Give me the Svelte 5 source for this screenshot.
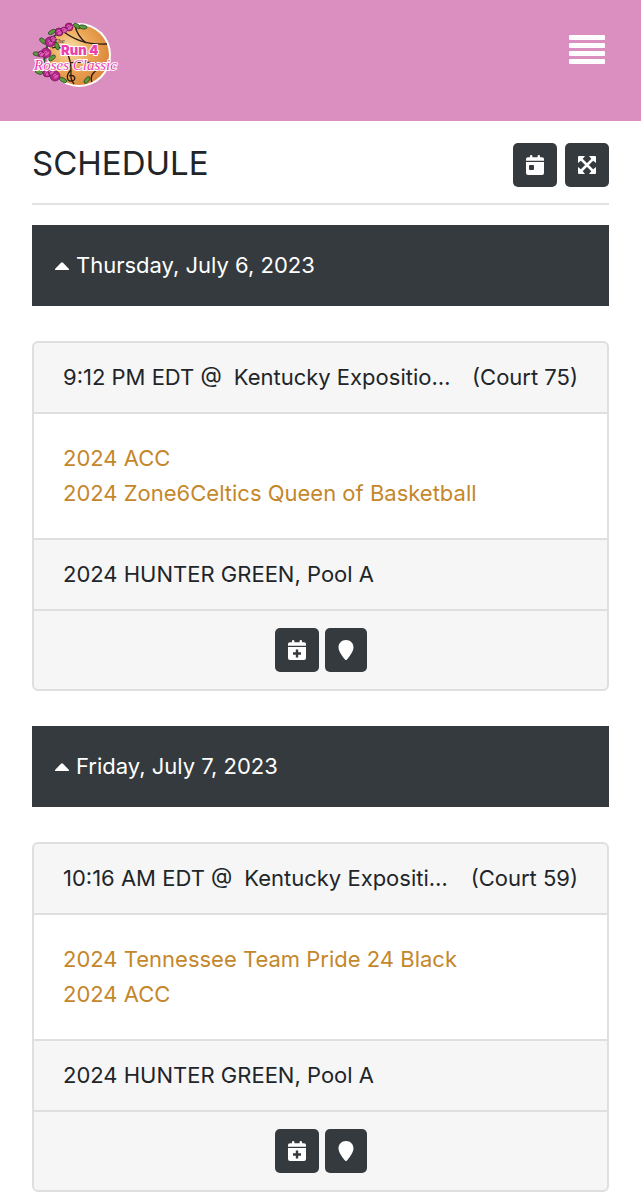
<script lang="ts">
	interface Game {
		time: string;
		venue: string;
		court: string;
		teams: string[];
		pool: string;
	}

	interface Day {
		date: string;
		open: boolean;
		games: Game[];
	}

	let days: Day[] = $state([
		{
			date: 'Thursday, July 6, 2023',
			open: true,
			games: [
				{
					time: '9:12 PM EDT',
					venue: 'Kentucky Exposition Center',
					court: 'Court 75',
					teams: ['2024 ACC', '2024 Zone6Celtics Queen of Basketball'],
					pool: '2024 HUNTER GREEN, Pool A'
				}
			]
		},
		{
			date: 'Friday, July 7, 2023',
			open: true,
			games: [
				{
					time: '10:16 AM EDT',
					venue: 'Kentucky Exposition Center',
					court: 'Court 59',
					teams: ['2024 Tennessee Team Pride 24 Black', '2024 ACC'],
					pool: '2024 HUNTER GREEN, Pool A'
				}
			]
		}
	]);

	const roses = [
		[39, 10, 4],
		[29, 15, 4],
		[34, 13, 3],
		[20, 25, 5],
		[23, 22, 3],
		[16, 36, 5],
		[11, 37, 3],
		[17, 56, 4],
		[25, 59, 5],
		[21, 55, 3]
	];
	const leaves = [
		[47, 9, 30],
		[53, 10, 10],
		[22, 15, -30],
		[13, 24, 40],
		[27, 29, 70],
		[7, 37, 10],
		[22, 41, -40],
		[9, 55, 20],
		[33, 63, 30],
		[57, 63, -50]
	];

	function toggleAll() {
		const open = days.some((day) => !day.open);
		days.forEach((day) => (day.open = open));
	}
</script>

<header>
	<a class="logo" href="/" aria-label="Run 4 Roses Classic">
		<svg width="90" height="74" viewBox="2 0 90 74">
			<defs>
				<radialGradient id="ball" cx="0.35" cy="0.4" r="0.7">
					<stop offset="0" stop-color="#fbe0ac" />
					<stop offset="0.5" stop-color="#eba655" />
					<stop offset="1" stop-color="#d98438" />
				</radialGradient>
			</defs>
			<circle cx="49" cy="38" r="32" fill="#fff" />
			<circle cx="49" cy="38" r="30" fill="url(#ball)" />
			<g fill="none" stroke="#2b1b14" stroke-width="1.3">
				<path d="M33 14C45 24 60 28 77 27" />
				<path d="M45 9C47 17 51 22 56 26" />
				<path d="M22 31C31 28 37 32 40 44S38 60 44 67" />
				<path d="M22 51C32 46 46 43 78 47" />
				<path d="M41 53C35 59 37 65 42 64S45 57 39 59" />
				<path d="M62 65C59 58 65 53 73 50" />
			</g>
			<path d="M39 11C25 15 17 25 15 37S14 53 26 60" fill="none" stroke="#245b2c" stroke-width="2" />
			{#each leaves as [x, y, angle]}
				<ellipse cx={x} cy={y} rx="4" ry="2" fill="#5d9b3d" stroke="#1e4424" stroke-width="0.7" transform="rotate({angle} {x} {y})" />
			{/each}
			{#each roses as [x, y, r]}
				<circle cx={x} cy={y} {r} fill="#b5268a" stroke="#681250" stroke-width="0.7" />
				<path d="M{x - 2} {y}q1 -3 3 -1t-2 2m0 1q3 1 4 -3" fill="none" stroke="#e46bbd" />
			{/each}
			<text class="the" x="24" y="26">The</text>
			<text class="run" x="31" y="38">Run 4</text>
			<text class="classic" x="4" y="53">Roses Classic</text>
		</svg>
	</a>
	<button class="menu" aria-label="Menu">
		<svg width="36" height="29" viewBox="0 0 36 29" fill="#fff">
			<rect width="36" height="5" rx="1" />
			<rect y="8" width="36" height="5" rx="1" />
			<rect y="16" width="36" height="5" rx="1" />
			<rect y="24" width="36" height="5" rx="1" />
		</svg>
	</button>
</header>

<main>
	<div class="title">
		<h1>SCHEDULE</h1>
		<div class="tools">
			<button class="btn" aria-label="Pick a day">
				<svg width="18" height="20" viewBox="0 0 18 20">
					<path fill="#fff" d="M0 7h18v11q0 2-2 2H2q-2 0-2-2zM0 5.8V4q0-1.8 2-1.8h2V1q0-1 1.2-1T6.4 1v1.2h5.2V1q0-1 1.2-1T14 1v1.2h2q2 0 2 1.8v1.8z" />
					<rect x="3" y="10" width="5" height="5" rx="1" fill="#343a3e" />
				</svg>
			</button>
			<button class="btn" aria-label="Expand or collapse all" onclick={toggleAll}>
				<svg width="18" height="18" viewBox="0 0 18 18">
					<path d="M3 3l12 12M15 3L3 15" stroke="#fff" stroke-width="2.5" />
					<path fill="#fff" d="M0 1q0-1 1-1h6L5 2.5 2.5 5 0 7zM18 1q0-1-1-1h-6l2 2.5L15.5 5 18 7zM0 17q0 1 1 1h6l-2-2.5L2.5 13 0 11zM18 17q0 1-1 1h-6l2-2.5 2.5-2.5 2.5-2z" />
				</svg>
			</button>
		</div>
	</div>

	{#each days as day}
		<section>
			<button class="day" aria-expanded={day.open} onclick={() => (day.open = !day.open)}>
				<svg class:closed={!day.open} width="14" height="8" viewBox="0 0 14 8">
					<path fill="#fff" d="M1 8Q-1 8 .5 6.5L6 .8q1-1 2 0l5.5 5.7Q15 8 13 8z" />
				</svg>
				{day.date}
			</button>
			{#if day.open}
				{#each day.games as game}
					<article>
						<div class="row where">
							<span>{game.time} @</span>
							<span class="venue">{game.venue}</span>
							<span>({game.court})</span>
						</div>
						<div class="row teams">
							{#each game.teams as team}
								<a href="/teams">{team}</a>
							{/each}
						</div>
						<div class="row">{game.pool}</div>
						<div class="row actions">
							<button class="btn" aria-label="Add to calendar">
								<svg width="18" height="20" viewBox="0 0 18 20">
									<path fill="#fff" d="M0 7h18v11q0 2-2 2H2q-2 0-2-2zM0 5.8V4q0-1.8 2-1.8h2V1q0-1 1.2-1T6.4 1v1.2h5.2V1q0-1 1.2-1T14 1v1.2h2q2 0 2 1.8v1.8z" />
									<path d="M9 9.5v8M5 13.5h8" stroke="#343a3e" stroke-width="2.4" />
								</svg>
							</button>
							<button class="btn pin" aria-label="Show on map">
								<svg width="16" height="20" viewBox="0 0 16 20">
									<path fill="#fff" d="M8 0C3.5 0 .5 3.3.5 7.5c0 4 4.5 9.5 6.5 12q1 1 2 0c2-2.5 6.5-8 6.5-12C15.5 3.3 12.5 0 8 0z" />
								</svg>
							</button>
						</div>
					</article>
				{/each}
			{/if}
		</section>
	{/each}
</main>

<style>
	:global(body) {
		background: #fff;
		color: #212529;
		font-family: Inter, 'Liberation Sans', sans-serif;
		font-size: 22px;
		line-height: 35px;
	}
	button {
		border: 0;
		font: inherit;
		cursor: pointer;
	}
	svg {
		display: block;
		flex: none;
	}
	header {
		display: flex;
		justify-content: space-between;
		align-items: flex-start;
		box-sizing: border-box;
		min-height: 121px;
		padding: 17px 32px;
		background: #da8fc0;
	}
	.logo svg {
		overflow: visible;
	}
	.the {
		font: italic 7px 'Liberation Serif', serif;
		fill: #222;
	}
	.run,
	.classic {
		fill: #ec3fae;
		stroke: #fff;
		stroke-width: 2px;
		paint-order: stroke;
	}
	.run {
		font: 900 13px Inter, sans-serif;
	}
	.classic {
		font: italic 15px 'Liberation Serif', serif;
	}
	.menu {
		padding: 18px 4px;
		background: none;
	}
	main {
		padding: 22px 32px 0;
	}
	.title {
		display: flex;
		justify-content: space-between;
		padding-bottom: 16px;
		border-bottom: 2px solid #e2e2e2;
		margin-bottom: 20px;
	}
	h1 {
		margin: 0;
		font-size: 33px;
		font-weight: 400;
		line-height: 40px;
	}
	.tools {
		display: flex;
		gap: 8px;
	}
	.btn {
		display: flex;
		justify-content: center;
		align-items: center;
		width: 44px;
		height: 44px;
		padding: 0;
		border-radius: 5px;
		background: #343a3e;
	}
	.pin {
		width: 42px;
	}
	section {
		margin-bottom: 35px;
	}
	section:last-child {
		margin-bottom: 0;
	}
	.day {
		display: flex;
		align-items: center;
		gap: 7px;
		width: 100%;
		padding: 23px;
		background: #343a3e;
		color: #fff;
		text-align: left;
	}
	.closed {
		transform: rotate(180deg);
	}
	article {
		margin-top: 35px;
		border: 2px solid #dedfdf;
		border-radius: 6px;
		background: #f6f6f6;
		overflow: hidden;
	}
	.row {
		padding: 17px 29px;
		border-bottom: 2px solid #dedfdf;
	}
	.row:last-child {
		border-bottom: 0;
	}
	.where {
		display: flex;
		gap: 12px;
		white-space: nowrap;
	}
	.venue {
		flex: 1;
		overflow: hidden;
		text-overflow: ellipsis;
	}
	.teams {
		display: flex;
		flex-direction: column;
		align-items: flex-start;
		padding: 27px 29px;
		background: #fff;
	}
	a {
		color: #c4872c;
		text-decoration: none;
	}
	.actions {
		display: flex;
		justify-content: center;
		gap: 6px;
	}
</style>
